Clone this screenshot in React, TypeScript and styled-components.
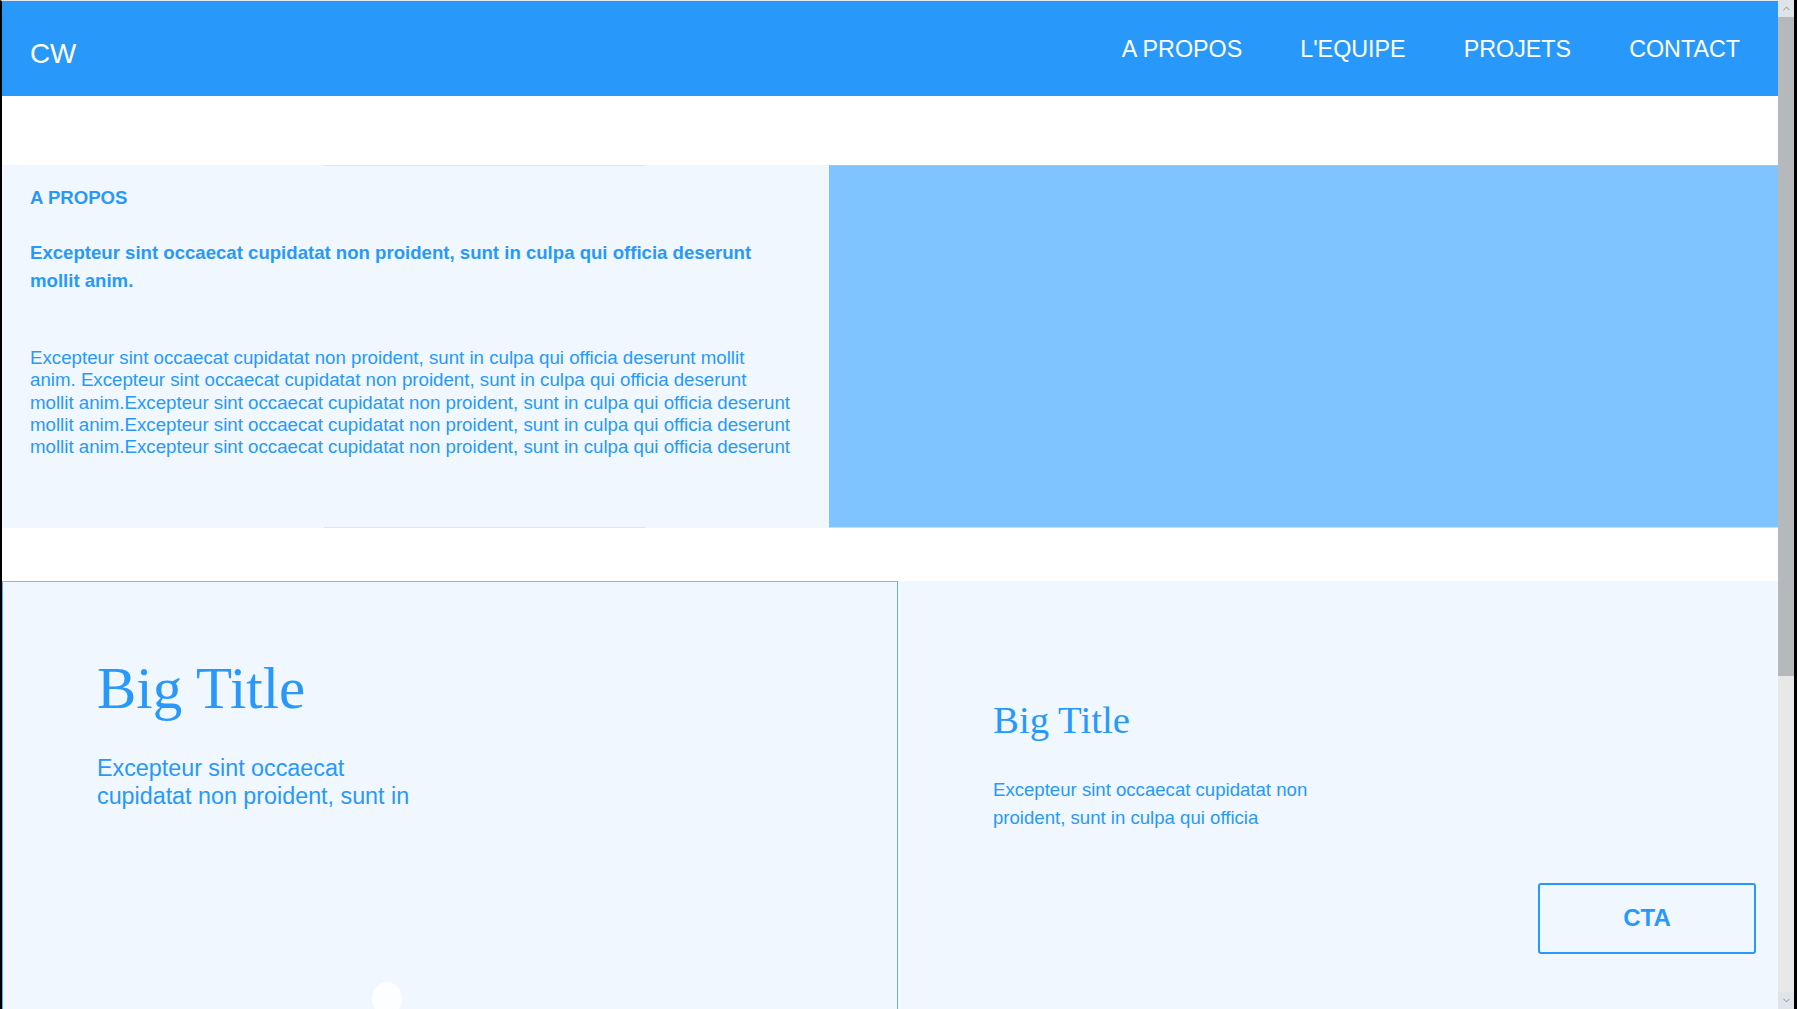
import React from "react";
import styled, { createGlobalStyle } from "styled-components";
import { ChevronUp, ChevronDown } from "lucide-react";

const BLUE = "#2899fb";
const PALE = "#f0f7fe";
const SKY = "#80c4fe";
const SANS = `"Liberation Sans", Arial, sans-serif`;
const SERIF = `"Liberation Serif", "Times New Roman", serif`;

const GlobalStyle = createGlobalStyle`
  html { background: #fff; }
  body {
    margin: 0 19px 0 0;
    border-left: 2px solid #000;
    border-top: 1px solid #e4e8ec;
    font-family: ${SANS};
    color: ${BLUE};
  }
  * { box-sizing: border-box; }
`;

const Header = styled.header`
  height: 95px;
  background: ${BLUE};
  display: flex;
  align-items: center;
  justify-content: space-between;
  padding: 0 38px 0 28px;
`;

const Logo = styled.div`
  font-size: 27.8px;
  color: #fff;
  padding-top: 10px;
`;

const Nav = styled.nav`
  display: flex;
  gap: 58px;
  padding-top: 1px;
`;

const NavLink = styled.a`
  font-size: 23.3px;
  color: #fff;
  text-decoration: none;
  cursor: pointer;
`;

const Main = styled.main`
  padding-top: 69px;
  display: flex;
  flex-direction: column;
  gap: 53px;
`;

const About = styled.section`
  display: grid;
  grid-template-columns: 827px 1fr;
  height: 363px;
`;

const AboutText = styled.div`
  position: relative;
  background: ${PALE};
  padding: 22px 37px 0 28px;
  &::before,
  &::after {
    content: "";
    position: absolute;
    left: 322px;
    width: 321px;
    height: 1px;
    background: #e1e6ec;
  }
  &::before { top: 0; }
  &::after { bottom: 0; }
`;

const Eyebrow = styled.h3`
  margin: 0;
  font-size: 18.6px;
  line-height: 22px;
  font-weight: 700;
`;

const Lead = styled.p`
  margin: 30px 0 0;
  font-size: 18.6px;
  line-height: 28px;
  font-weight: 700;
`;

const Body = styled.p`
  margin: 52px 0 0;
  font-size: 18.7px;
  line-height: 22.3px;
`;

const Visual = styled.div`
  background: ${SKY};
  border-top: 1px solid #8fcbfe;
  border-bottom: 1px solid #bfe0fc;
`;

const Features = styled.section`
  display: grid;
  grid-template-columns: 896px 1fr;
  height: 912px;
`;

const Card = styled.article<{ $bordered?: boolean; $top: number }>`
  position: relative;
  background: ${PALE};
  border: ${(p) => (p.$bordered ? `1px solid #5eaff5` : "none")};
  border-top-color: ${(p) => (p.$bordered ? "#7cbff7" : "transparent")};
  padding: ${(p) => p.$top}px 22px 0 ${(p) => (p.$bordered ? 94 : 95)}px;
  display: flex;
  flex-direction: column;
`;

const BigTitle = styled.h2<{ $size: number }>`
  margin: 0;
  font-family: ${SERIF};
  font-weight: 400;
  font-size: ${(p) => p.$size}px;
  line-height: 1.15;
`;

const Copy = styled.p<{ $size: number; $gap: number; $max: number }>`
  margin: ${(p) => p.$gap}px 0 0;
  font-size: ${(p) => p.$size}px;
  line-height: 28px;
  max-width: ${(p) => p.$max}px;
`;

const Actions = styled.div`
  display: flex;
  justify-content: flex-end;
  margin-top: 51px;
`;

const CtaButton = styled.button`
  width: 218px;
  height: 71px;
  border: 2px solid ${BLUE};
  border-radius: 3px;
  background: transparent;
  color: ${BLUE};
  font-family: ${SANS};
  font-weight: 700;
  font-size: 24px;
  cursor: pointer;
`;

const Dot = styled.span`
  position: absolute;
  left: 369px;
  top: 400px;
  width: 30px;
  height: 34px;
  border-radius: 50%;
  background: #fdfeff;
`;

/* browser window scrollbar, drawn over the right edge */
const ScrollRail = styled.div`
  position: fixed;
  top: 0;
  right: 0;
  width: 19px;
  height: 100vh;
  border-right: 3px solid #000;
  background: #e8e8e8;
  display: flex;
  flex-direction: column;
`;

const ScrollButton = styled.div`
  height: 17px;
  flex: none;
  display: flex;
  align-items: center;
  justify-content: center;
  background: #dfe4e9;
  color: #5f6770;
`;

const ScrollThumb = styled.div`
  height: 659px;
  flex: none;
  background: #b6b9bc;
`;

const ScrollTrack = styled.div`
  flex: 1;
`;

const navItems = ["A PROPOS", "L'EQUIPE", "PROJETS", "CONTACT"];

const lorem = "Excepteur sint occaecat cupidatat non proident, sunt in culpa qui officia deserunt mollit anim.";

export default function App() {
  return (
    <>
      <GlobalStyle />
      <Header>
        <Logo>CW</Logo>
        <Nav>
          {navItems.map((n) => (
            <NavLink key={n}>{n}</NavLink>
          ))}
        </Nav>
      </Header>
      <Main>
        <About>
          <AboutText>
            <Eyebrow>A PROPOS</Eyebrow>
            <Lead>{lorem}</Lead>
            <Body>
              Excepteur sint occaecat cupidatat non proident, sunt in culpa qui officia deserunt mollit anim.
              Excepteur sint occaecat cupidatat non proident, sunt in culpa qui officia deserunt mollit
              anim.Excepteur sint occaecat cupidatat non proident, sunt in culpa qui officia deserunt mollit
              anim.Excepteur sint occaecat cupidatat non proident, sunt in culpa qui officia deserunt mollit
              anim.Excepteur sint occaecat cupidatat non proident, sunt in culpa qui officia deserunt
            </Body>
          </AboutText>
          <Visual />
        </About>
        <Features>
          <Card $bordered $top={73}>
            <BigTitle $size={59}>Big Title</BigTitle>
            <Copy $size={23.3} $gap={31} $max={330}>
              Excepteur sint occaecat cupidatat non proident, sunt in
            </Copy>
            <Dot />
          </Card>
          <Card $top={117}>
            <BigTitle $size={38.8}>Big Title</BigTitle>
            <Copy $size={18.6} $gap={33} $max={340}>
              Excepteur sint occaecat cupidatat non proident, sunt in culpa qui officia
            </Copy>
            <Actions>
              <CtaButton>CTA</CtaButton>
            </Actions>
          </Card>
        </Features>
      </Main>
      <ScrollRail>
        <ScrollButton>
          <ChevronUp size={11} strokeWidth={1.5} />
        </ScrollButton>
        <ScrollThumb />
        <ScrollTrack />
        <ScrollButton>
          <ChevronDown size={11} strokeWidth={1.5} />
        </ScrollButton>
      </ScrollRail>
    </>
  );
}
